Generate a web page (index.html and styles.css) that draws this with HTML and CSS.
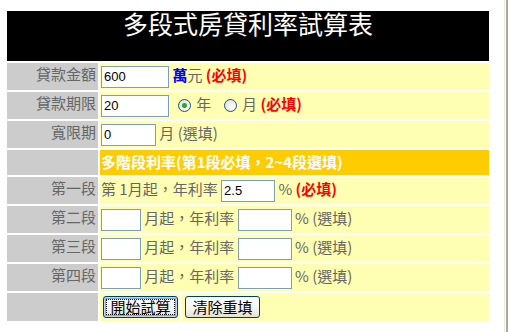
FILE: index.html
```html
<!DOCTYPE html>
<html lang="zh-Hant">
<head>
  <meta charset="UTF-8" />
  <title>多段式房貸利率試算表</title>
  <link rel="stylesheet" href="styles.css">
</head>
<body>
  <div class="window">
    <form class="calc">
      <table class="calc-table">
        <colgroup>
          <col class="c-label"><col class="c-btn"><col class="c-rest">
        </colgroup>
        <!-- 標題 -->
        <tr class="r-title"><td colspan="3" class="title">多段式房貸利率試算表</td></tr>

        <!-- 基本資料 -->
        <tr class="r-row">
          <td class="label">貸款金額</td>
          <td colspan="2" class="data"><input class="txt w68" value="600"> <b class="blue">萬</b>元 <b class="red">(必填)</b></td>
        </tr>
        <tr class="r-row">
          <td class="label">貸款期限</td>
          <td colspan="2" class="data"><input class="txt w68" value="20"><input type="radio" name="unit" class="radio" checked> 年 <input type="radio" name="unit" class="radio"> 月 <b class="red">(必填)</b></td>
        </tr>
        <tr class="r-row">
          <td class="label">寬限期</td>
          <td colspan="2" class="data"><input class="txt w55" value="0"> 月 (選填)</td>
        </tr>

        <!-- 多階段利率 -->
        <tr class="r-section">
          <td class="label"></td>
          <td colspan="2" class="section">多階段利率(第1段必填，2~4段選填)</td>
        </tr>
        <tr class="r-row">
          <td class="label">第一段</td>
          <td colspan="2" class="data">第 1月起，年利率 <input class="txt w54" value="2.5"> % <b class="red">(必填)</b></td>
        </tr>
        <tr class="r-row">
          <td class="label">第二段</td>
          <td colspan="2" class="data"><input class="txt w40"> 月起，年利率 <input class="txt w54"> % (選填)</td>
        </tr>
        <tr class="r-row">
          <td class="label">第三段</td>
          <td colspan="2" class="data"><input class="txt w40"> 月起，年利率 <input class="txt w54"> % (選填)</td>
        </tr>
        <tr class="r-row">
          <td class="label">第四段</td>
          <td colspan="2" class="data"><input class="txt w40"> 月起，年利率 <input class="txt w54"> % (選填)</td>
        </tr>

        <!-- 按鈕 -->
        <tr class="r-btn">
          <td class="label"></td>
          <td class="data"><button type="button" class="btn focused">開始試算</button></td>
          <td class="data"><button type="reset" class="btn">清除重填</button></td>
        </tr>
      </table>
    </form>
  </div>
</body>
</html>
```

FILE: styles.css
```css
/* 多段式房貸利率試算表 */
:root {
  --label-bg: #cccccc;
  --data-bg: #ffffb3;
  --section-bg: #ffcc00;
  --text-gray: #666666;
  --input-border: #7f9db9;
}
* { box-sizing: border-box; }
html, body { margin: 0; padding: 0; background: #fff; }
body {
  font-family: "Noto Sans CJK TC", "Noto Sans CJK SC", sans-serif;
  font-size: 15px;
  color: var(--text-gray);
}
.window {
  width: 505px; min-height: 100vh;
  border-right: 1px solid #ece9d8;
  box-shadow: 1px 0 0 #fff, 3px 0 0 #aca899;
  padding: 9px 0 0 5px;
}
.calc { margin: 0; }
.calc-table {
  width: 486px; table-layout: fixed;
  border-collapse: separate; border-spacing: 2px;
}
.c-label { width: 91px; }
.c-btn { width: 80px; }
.c-rest { width: 307px; }
.calc-table td { padding: 0; }

.r-title td { height: 50px; }
.r-row td { height: 27px; }
.r-section td { height: 25px; }
.r-btn td { height: 28px; }

.title {
  background: #000; color: #fff;
  font-size: 25px; line-height: 25px;
  text-align: center; vertical-align: top;
}
.label {
  background: var(--label-bg);
  text-align: right; vertical-align: top;
  padding: 1px 2px 0 0 !important;
  line-height: 20px; white-space: nowrap;
}
.data {
  background: var(--data-bg);
  padding: 0 0 0 1px !important;
  line-height: 20px; white-space: nowrap;
  vertical-align: middle;
}
.section {
  background: var(--section-bg); color: #fff;
  font-weight: 700; line-height: 20px;
  padding: 0 0 2px 1px !important;
  white-space: nowrap;
}
.blue { color: #0000ff; }
.red { color: #ff0000; }

.txt {
  height: 22px; margin: 0; padding: 1px 2px;
  border: 1px solid var(--input-border);
  background: #fff; color: #000;
  font-family: "Liberation Sans", Arial, sans-serif;
  font-size: 13px; vertical-align: middle;
}
.w68 { width: 68px; }
.w55 { width: 55px; }
.w54 { width: 54px; }
.w40 { width: 40px; }

.radio {
  appearance: none; -webkit-appearance: none;
  width: 13px; height: 13px; margin: 0 2px 0 9px;
  border: 1px solid #1c5180; border-radius: 50%;
  background: radial-gradient(circle at 65% 65%, #fff 0, #e6e4dc 70%, #d4d1c5 100%);
  vertical-align: middle;
}
.radio:checked {
  background:
    radial-gradient(circle, #31b331 0, #21a121 2px, transparent 3px),
    radial-gradient(circle at 65% 65%, #fff 0, #e6e4dc 70%, #d4d1c5 100%);
}

.btn {
  height: 22px; width: 75px; margin: 0 0 0 2px; padding: 0;
  border: 1px solid #003c74; border-radius: 3px;
  background: linear-gradient(#ffffff, #f4f3ee 60%, #e3e1d6);
  color: #000; font-family: inherit; font-size: 15px;
  line-height: 18px; cursor: pointer;
  vertical-align: middle;
}
.btn.focused {
  box-shadow: inset 0 0 0 1px #c2d6f7, inset 0 0 0 2px #86a9e3;
  outline: 1px dotted #000; outline-offset: -4px;
}
```
